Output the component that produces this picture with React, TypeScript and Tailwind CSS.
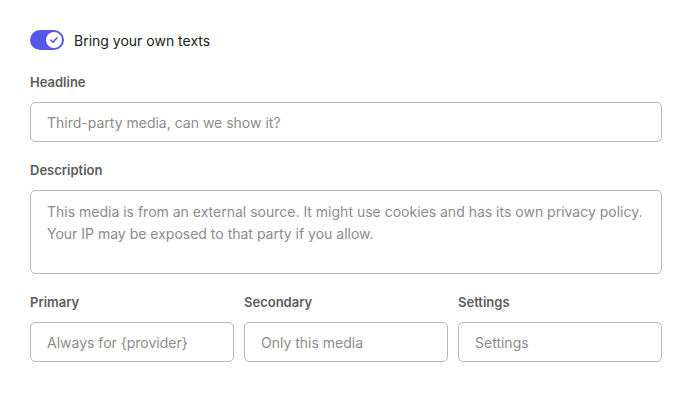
import React, { useState } from 'react';

const Field = ({ label, placeholder }: { label: string; placeholder: string }) => (
    <div className="flex flex-col">
        <label className="text-[13px] leading-5 font-semibold text-[#5c5c5c] mb-[10px]">{label}</label>
        <input
            placeholder={placeholder}
            className="h-10 w-full rounded-[5px] border border-[#b9b9b9] bg-white px-4 text-[14px] text-[#333] placeholder:text-[#8c8c8c] outline-none"
        />
    </div>
);

export default function App() {
    const [own, setOwn] = useState(true);

    return (
        <div className="min-h-screen bg-white px-[30px] pt-[30px] font-['Inter',sans-serif]">
            {/* Toggle */}
            <div className="flex items-center gap-[10px] h-5">
                <button
                    onClick={() => setOwn(!own)}
                    className="relative w-[34px] h-5 rounded-full bg-[#5457e8] flex items-center justify-end px-[2px]"
                >
                    <span className="w-4 h-4 rounded-full bg-white flex items-center justify-center">
                        <svg width="10" height="10" viewBox="0 0 10 10" fill="none">
                            <path d="M2 5.2l2 2 4-4.4" stroke="#5457e8" strokeWidth="1.6" strokeLinecap="round" strokeLinejoin="round" />
                        </svg>
                    </span>
                </button>
                <span className="text-[14px] text-[#222]">Bring your own texts</span>
            </div>

            <div className="mt-[22px] flex flex-col gap-[18px]">
                <Field label="Headline" placeholder="Third-party media, can we show it?" />

                <div className="flex flex-col">
                    <label className="text-[13px] leading-5 font-semibold text-[#5c5c5c] mb-[10px]">Description</label>
                    <textarea
                        placeholder="This media is from an external source. It might use cookies and has its own privacy policy. Your IP may be exposed to that party if you allow."
                        className="h-[84px] w-full resize-none rounded-[5px] border border-[#b9b9b9] bg-white px-4 pt-[10px] text-[14px] leading-[22px] text-[#333] placeholder:text-[#8c8c8c] outline-none"
                    />
                </div>

                <div className="grid grid-cols-3 gap-[10px]">
                    <Field label="Primary" placeholder="Always for {provider}" />
                    <Field label="Secondary" placeholder="Only this media" />
                    <Field label="Settings" placeholder="Settings" />
                </div>
            </div>
        </div>
    );
}
